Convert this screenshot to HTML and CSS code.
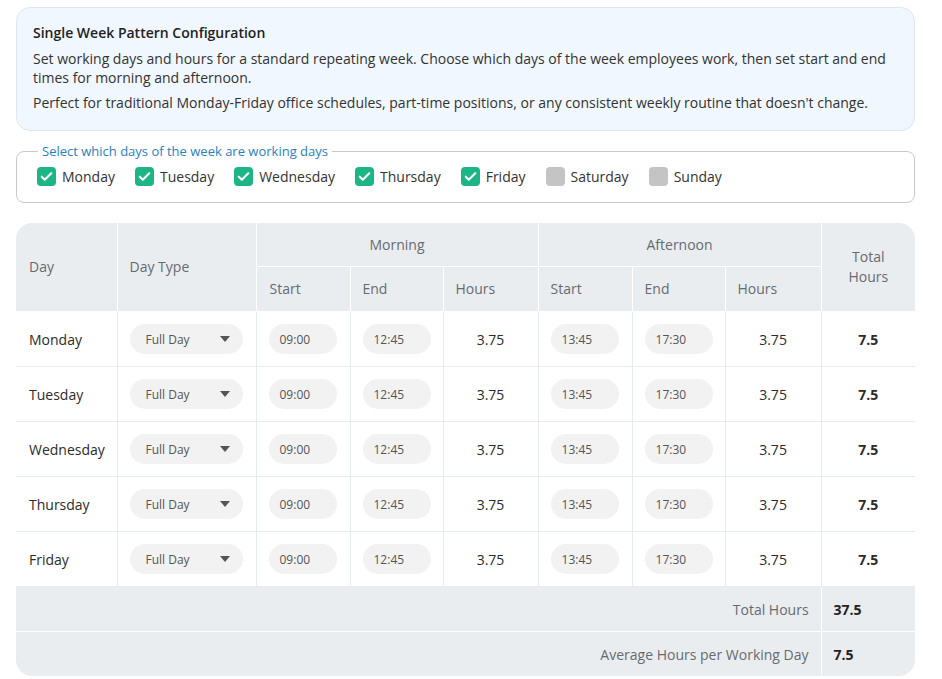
FILE: index.html
```html
<!DOCTYPE html>
<html lang="en">
<head>
    <meta charset="UTF-8">
    <title>Single Week Pattern</title>
    <link rel="stylesheet" href="styles.css">
</head>
<body>
    <div class="container">
        <div class="info-box">
            <h3>Single Week Pattern Configuration</h3>
            <p>Set working days and hours for a standard repeating week. Choose which days of the week employees work, then set start and end times for morning and afternoon.</p>
            <p>Perfect for traditional Monday-Friday office schedules, part-time positions, or any consistent weekly routine that doesn't change.</p>
        </div>

        <fieldset class="days">
            <legend>Select which days of the week are working days</legend>
            <div class="day-list">
                <label class="day"><span class="box checked"><svg viewBox="0 0 20 20" width="19" height="19"><path d="M5 10.2l3.2 3.2L15 6.6" fill="none" stroke="#fff" stroke-width="2.2" stroke-linecap="round" stroke-linejoin="round"/></svg></span>Monday</label>
                <label class="day"><span class="box checked"><svg viewBox="0 0 20 20" width="19" height="19"><path d="M5 10.2l3.2 3.2L15 6.6" fill="none" stroke="#fff" stroke-width="2.2" stroke-linecap="round" stroke-linejoin="round"/></svg></span>Tuesday</label>
                <label class="day"><span class="box checked"><svg viewBox="0 0 20 20" width="19" height="19"><path d="M5 10.2l3.2 3.2L15 6.6" fill="none" stroke="#fff" stroke-width="2.2" stroke-linecap="round" stroke-linejoin="round"/></svg></span>Wednesday</label>
                <label class="day"><span class="box checked"><svg viewBox="0 0 20 20" width="19" height="19"><path d="M5 10.2l3.2 3.2L15 6.6" fill="none" stroke="#fff" stroke-width="2.2" stroke-linecap="round" stroke-linejoin="round"/></svg></span>Thursday</label>
                <label class="day"><span class="box checked"><svg viewBox="0 0 20 20" width="19" height="19"><path d="M5 10.2l3.2 3.2L15 6.6" fill="none" stroke="#fff" stroke-width="2.2" stroke-linecap="round" stroke-linejoin="round"/></svg></span>Friday</label>
                <label class="day"><span class="box"></span>Saturday</label>
                <label class="day"><span class="box"></span>Sunday</label>
            </div>
        </fieldset>

        <div class="table-wrap">
            <table class="schedule">
                <colgroup>
                    <col style="width: 101px">
                    <col style="width: 139px">
                    <col style="width: 94px">
                    <col style="width: 93px">
                    <col style="width: 95px">
                    <col style="width: 94px">
                    <col style="width: 93px">
                    <col style="width: 96px">
                    <col style="width: 94px">
                </colgroup>
                <thead>
                    <tr class="head-top">
                        <th rowspan="2">Day</th>
                        <th rowspan="2">Day Type</th>
                        <th colspan="3" class="center">Morning</th>
                        <th colspan="3" class="center">Afternoon</th>
                        <th rowspan="2" class="center total-head">Total<br>Hours</th>
                    </tr>
                    <tr class="head-sub">
                        <th>Start</th>
                        <th>End</th>
                        <th>Hours</th>
                        <th>Start</th>
                        <th>End</th>
                        <th>Hours</th>
                    </tr>
                </thead>
                <tbody id="rows"></tbody>
                <tfoot>
                    <tr>
                        <td colspan="8" class="foot-label">Total Hours</td>
                        <td class="foot-value">37.5</td>
                    </tr>
                    <tr>
                        <td colspan="8" class="foot-label">Average Hours per Working Day</td>
                        <td class="foot-value">7.5</td>
                    </tr>
                </tfoot>
            </table>
        </div>
    </div>

    <script>
        const days = ['Monday', 'Tuesday', 'Wednesday', 'Thursday', 'Friday'];
        const tbody = document.getElementById('rows');

        days.forEach(day => {
            const tr = document.createElement('tr');
            tr.innerHTML = `
                <td class="day-name">${day}</td>
                <td><span class="select">Full Day<span class="caret"></span></span></td>
                <td><span class="time">09:00</span></td>
                <td><span class="time">12:45</span></td>
                <td class="hours">3.75</td>
                <td><span class="time">13:45</span></td>
                <td><span class="time">17:30</span></td>
                <td class="hours">3.75</td>
                <td class="total">7.5</td>
            `;
            tbody.appendChild(tr);
        });
    </script>
</body>
</html>
```

FILE: styles.css
```css
:root {
    --text-color: #2b2b2b;
    --muted-color: #666b70;
    --head-bg: #eaedf0;
    --line-color: #e8ebee;
    --pill-bg: #f2f2f2;
    --green: #1db585;
    --blue: #2a7fc1;
}
body {
    font-family: 'Open Sans', 'Noto Sans', sans-serif;
    color: var(--text-color);
    background: #fff;
    margin: 0;
    padding: 7px 0 0 16px;
}
.container {
    width: 899px;
}
.info-box {
    background-color: #f0f7fe;
    border: 1px solid #dce7f1;
    border-radius: 14px;
    padding: 15px 16px 18px 16px;
    font-size: 14px;
    line-height: 19.5px;
}
.info-box h3 {
    margin: 0 0 6px;
    font-size: 14px;
    font-weight: 600;
    color: #222;
}
.info-box p {
    margin: 0 0 5px;
    color: #333;
}
.info-box p:last-child {
    margin-bottom: 0;
}
.days {
    margin: 11px 0 0;
    padding: 7px 20px 16px 20px;
    border: 1px solid #c9c9c9;
    border-radius: 8px;
}
.days legend {
    font-size: 13px;
    color: var(--blue);
    padding: 0 4px;
    margin-left: 1px;
}
.day-list {
    display: flex;
    gap: 20px;
}
.day {
    display: flex;
    align-items: center;
    gap: 6px;
    font-size: 14px;
    color: #333;
}
.box {
    width: 19px;
    height: 19px;
    border-radius: 4px;
    background-color: #c4c4c4;
    display: flex;
}
.box.checked {
    background-color: var(--green);
}
.table-wrap {
    margin-top: 20px;
    border-radius: 16px;
    overflow: hidden;
}
.schedule {
    width: 100%;
    border-collapse: collapse;
    table-layout: fixed;
    font-size: 14px;
}
.schedule th {
    background-color: var(--head-bg);
    color: var(--muted-color);
    font-weight: 400;
    text-align: left;
    padding: 0 12px;
    border: 1px solid #fff;
    line-height: 20px;
}
.schedule th.center {
    text-align: center;
}
.head-top th {
    height: 43px;
    border-top: none;
}
.head-sub th {
    height: 44px;
}
.schedule th:first-child {
    border-left: none;
    padding-left: 13px;
}
.schedule th.total-head {
    border-right: none;
}
.schedule td {
    border: 1px solid var(--line-color);
    padding: 0 12px;
    height: 54px;
}
.schedule tbody td:first-child {
    border-left: none;
    padding-left: 13px;
}
.schedule tbody td:last-child {
    border-right: none;
}
.schedule tbody tr:first-child td {
    border-top: none;
}
.day-name {
    color: #2b2b2b;
}
.select {
    display: flex;
    align-items: center;
    justify-content: space-between;
    width: 113px;
    height: 30px;
    box-sizing: border-box;
    padding: 0 13px 0 16px;
    border-radius: 15px;
    background-color: var(--pill-bg);
    font-size: 12px;
    color: #555;
}
.caret {
    width: 0;
    height: 0;
    border-left: 5px solid transparent;
    border-right: 5px solid transparent;
    border-top: 6px solid #555;
}
.time {
    display: flex;
    align-items: center;
    width: 68px;
    height: 30px;
    box-sizing: border-box;
    padding-left: 11px;
    border-radius: 15px;
    background-color: var(--pill-bg);
    font-size: 12px;
    color: #555;
}
.hours {
    text-align: center;
    color: #2b2b2b;
}
.total {
    text-align: center;
    font-weight: 700;
}
.schedule tfoot td {
    background-color: var(--head-bg);
    height: 44px;
    border: none;
    border-top: 1px solid #fff;
}
.schedule tfoot tr:first-child td {
    border-top: none;
}
.foot-label {
    text-align: right;
    color: var(--muted-color);
}
.schedule tfoot .foot-value {
    border-left: 1px solid #fff;
    font-weight: 700;
    color: #222;
}
```
